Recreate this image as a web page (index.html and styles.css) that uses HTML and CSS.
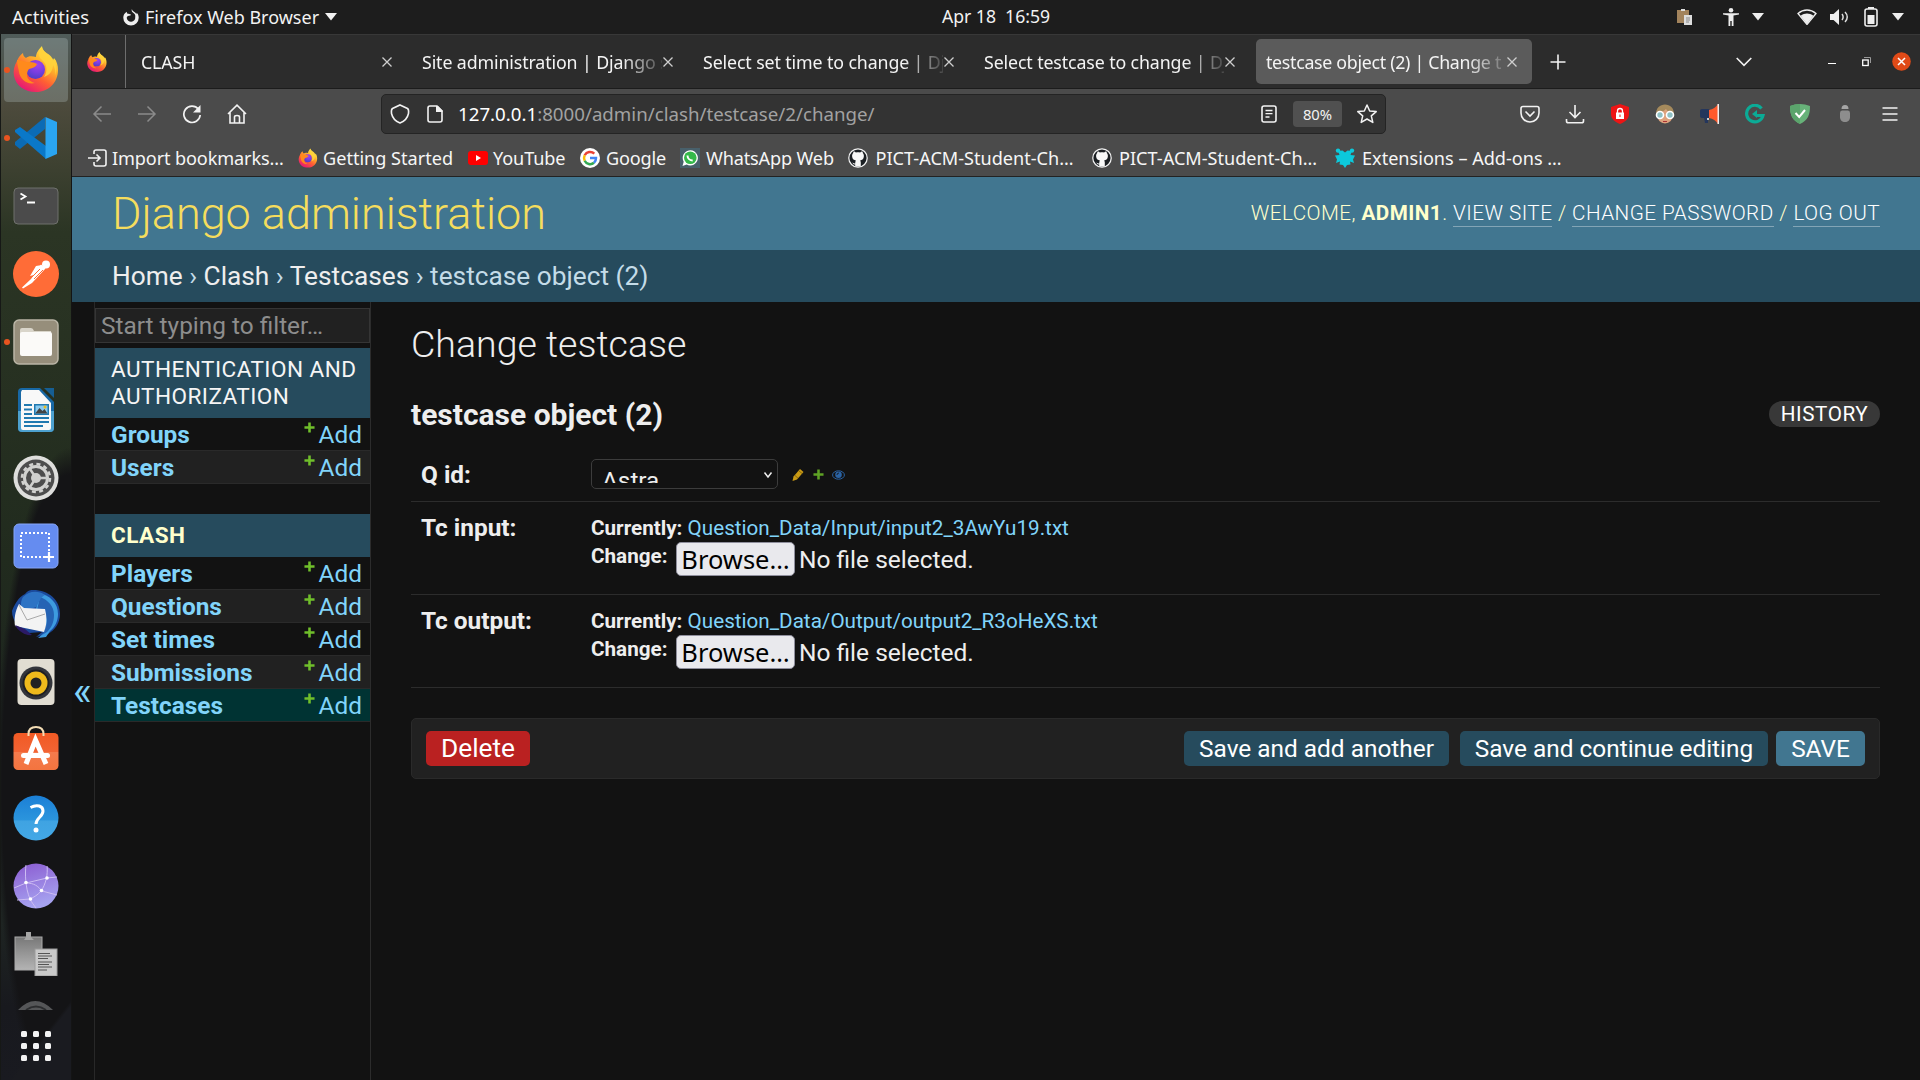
FILE: index.html
```html
<!DOCTYPE html>
<html lang="en">
<head>
<meta charset="utf-8">
<title>testcase object (2) | Change testcase</title>
<link rel="stylesheet" href="styles.css">
</head>
<body>
<svg class="defs" width="0" height="0" aria-hidden="true">
  <defs>
    <linearGradient id="ffBody" x1="0.85" y1="0.05" x2="0.25" y2="1">
      <stop offset="0" stop-color="#fff14a"/><stop offset="0.35" stop-color="#ffb02a"/><stop offset="0.62" stop-color="#ff5f33"/><stop offset="1" stop-color="#e5127a"/>
    </linearGradient>
    <radialGradient id="ffGlobe" cx="0.6" cy="0.25" r="0.8">
      <stop offset="0" stop-color="#a741e8"/><stop offset="0.5" stop-color="#7a3ee0"/><stop offset="1" stop-color="#4b3fc4"/>
    </radialGradient>
    <symbol id="firefox" viewBox="0 0 46 48">
      <path fill="url(#ffBody)" d="M29 1c-3 3-6 7-6 11-4-1-8-1-10 1-2-1-3-3-3-5-3 2-5 5-6 8-3 5-4 10-3 15 2 10 11 16 22 16 13 0 22-10 22-22 0-4-1-9-4-12l-1 3c-1-5-5-6-8-9-2-2-3-4-3-6z"/>
      <circle cx="22.500" cy="24.500" r="9.500" fill="url(#ffGlobe)"/>
      <path fill="#ff8a1c" d="M4 15c4 0 7 1 9 2 4 0 8 0 11 2-1 3-4 4-8 5-1 1-2 3-2 6 0 4 4 7 8 8-8 2-15-4-16-11-.6-4-2-8-2-12z"/>
      <path fill="#ffd43c" opacity=".85" d="M29 2c-4 5-4 10 0 13 5 4 6 11 2 17 6-2 9-7 9-12 2 3 3 7 2 11 3-8 1-15-3-18-1-4-9-5-10-11z"/>
    </symbol>
    <symbol id="close" viewBox="0 0 12 12"><path d="M1.500 1.500l9 9m0-9l-9 9" fill="none" stroke="currentColor" stroke-width="1.300"/></symbol>
    <symbol id="tri" viewBox="0 0 12 8"><path d="M0 0h12L6 7.500z" fill="currentColor"/></symbol>
    <symbol id="github" viewBox="0 0 20 20">
      <circle cx="10" cy="10" r="9.800" fill="#f4f4f4"/><circle cx="10" cy="10" r="8.600" fill="#1b1f23"/>
      <path fill="#f8f8f8" d="M5.200 5c0-.8.200-1.400.5-1.600.8 0 1.700.5 2.300 1 1.300-.3 2.700-.3 4 0 .6-.5 1.500-1 2.300-1 .3.200.6.900.5 1.700.9 1 1.300 2.300 1 3.900-.4 2.300-1.800 3.100-3.700 3.400.5.600.7 1.200.7 2V18c-1.800.7-3.800.7-5.600 0v-1.500c-2 .3-2.300-1.200-3-1.900 1.100 0 1.500 1.300 3 .9 0-1.300.2-2.300.7-3.100-2-.3-3.300-1.200-3.700-3.400-.3-1.600.1-2.900 1-4z"/>
    </symbol>
    <symbol id="plus" viewBox="0 0 12 12"><path d="M6 .5v11M.5 6h11" stroke="#70bf2b" stroke-width="2.800" fill="none"/></symbol>
    <linearGradient id="blueV" x1="0" y1="0" x2="0" y2="1"><stop offset="0" stop-color="#1b7fd6"/><stop offset=".55" stop-color="#2b95dd"/><stop offset=".56" stop-color="#3fa3e2"/><stop offset="1" stop-color="#43a8e6"/></linearGradient>
    <linearGradient id="purpleV" x1="0" y1="0" x2=".3" y2="1"><stop offset="0" stop-color="#8a5ad0"/><stop offset="1" stop-color="#a6a2f0"/></linearGradient>
    <linearGradient id="greyV" x1="0" y1="0" x2="0" y2="1"><stop offset="0" stop-color="#787878"/><stop offset="1" stop-color="#b4b4b4"/></linearGradient>
    <linearGradient id="orangeV" x1="0" y1="0" x2="0" y2="1"><stop offset="0" stop-color="#f15a24"/><stop offset=".5" stop-color="#f26333"/><stop offset=".51" stop-color="#f47b4d"/><stop offset="1" stop-color="#f3743f"/></linearGradient>
  </defs>
</svg>

<div class="desktop">
  <header class="topbar">
    <div class="topbar-left">
      <span class="activities">Activities</span>
      <svg class="app-glyph" width="16" height="17" viewBox="0 0 17 18"><path fill="#eee" d="M9.500 0c-.6 1.500-.3 2.600 1 3.700 2 1.300 3 3 2.500 5a4.500 4.500 0 0 1-9 .8c0-1.300.9-2 2.300-2.300 1.200-.2 2-.6 2.300-1.200C7.300 5.200 5.700 5 5 5 4.300 4.500 4 3.500 4 2.800 1.500 4.200.3 6.500.3 9.300a8.200 8.200 0 0 0 16.400 0C16.700 6.500 15.500 5 14.500 4l-.3 1.500C13.500 3 10 3 9.500 0z"/></svg>
      <span class="app-name">Firefox Web Browser</span>
      <svg class="tri" width="12" height="8"><use href="#tri"/></svg>
    </div>
    <div class="clock">Apr 18&nbsp; 16:59</div>
    <div class="tray">
      <svg width="16" height="18" viewBox="0 0 16 18"><path fill="#a2835c" d="M0 2h12v13H0z"/><path fill="#ddd" d="M4 1h4v2H4zM7 7h8v10H7z"/><path stroke="#888" d="M9 10h4M9 12h4M9 14h3"/></svg>
      <svg class="t-person" width="16" height="18" viewBox="0 0 16 18"><circle cx="8" cy="2.300" r="2.300" fill="#eee"/><path fill="#eee" d="M0 5.200h16v1.300l-5.500.9v10.600H8.700v-5H7.300v5H5.500V7.400L0 6.500z"/></svg>
      <svg class="t-tri" width="12" height="8"><use href="#tri"/></svg>
      <svg class="t-wifi" width="20" height="16" viewBox="0 0 20 16"><path d="M1 4.500C6.500-.2 13.500-.2 19 4.500L10 15.500z" fill="none" stroke="#eee" stroke-width="1.300"/><path d="M3.600 6.800c4-3.200 8.800-3.200 12.800 0L10 15z" fill="#eee"/></svg>
      <svg class="t-sound" width="20" height="16" viewBox="0 0 20 16"><path d="M0 5h3.500L9 0v16l-5.500-5H0z" fill="#eee"/><path d="M12 5c1.500 2 1.500 4 0 6M15 3c3 3 3 7 0 10" fill="none" stroke="#ddd" stroke-width="1.500"/></svg>
      <svg class="t-batt" width="14" height="20" viewBox="0 0 14 20"><path d="M4 0h6v2H4z" fill="#eee"/><rect x="1" y="2" width="12" height="17" rx="2" fill="none" stroke="#eee" stroke-width="1.600"/><path fill="#eee" d="M3.500 8h7v9h-7z"/></svg>
      <svg class="t-tri2" width="12" height="8"><use href="#tri"/></svg>
    </div>
  </header>

  <nav class="dock">
    <div class="dock-item active running"><svg width="46" height="48"><use href="#firefox"/></svg></div>
    <div class="dock-item running"><svg width="42" height="42" viewBox="0 0 42 42"><path fill="#0b6bb5" d="M30 0v12L5 32l-5-4v-3z"/><path fill="#0a78c9" d="M5 10l26 19v13L0 15v-2z"/><path fill="#2aa5f2" d="M30.500 0L42 5v32l-11.500 5z"/></svg></div>
    <div class="dock-item"><svg width="46" height="38" viewBox="0 0 46 38"><rect x="1" y="1" width="44" height="36" rx="4" fill="#4b4b4b" stroke="#6f716c"/><path d="M7.500 6.500l5 3-5 3M14 15.500h8" fill="none" stroke="#fff" stroke-width="1.800"/></svg></div>
    <div class="dock-item"><svg width="46" height="46" viewBox="0 0 46 46"><circle cx="23" cy="23" r="23" fill="#ff6c37"/><g transform="translate(23 23)" fill="#fff"><circle cx="10" cy="-9.500" r="4"/><path d="M5-9.500l4.500 4L-4 9l-9 5.500-1-1L-5 5z"/><path d="M0-8l6-1-8 10-4 1z"/><path d="M-4 3l8-8M-2 5l9-9" stroke="#ff6c37"/></g></svg></div>
    <div class="dock-item running"><svg width="46" height="46" viewBox="0 0 46 46"><rect x="1" y="1" width="44" height="44" rx="5" fill="#968e7b" stroke="#bab5a6" stroke-width="1.500"/><path fill="#d9d5ca" d="M7 11q0-2 2-2h9q2 0 3 3h17v8H7z"/><rect x="7" y="13" width="32" height="24" rx="2" fill="#fbfaf8"/></svg></div>
    <div class="dock-item"><svg width="38" height="46" viewBox="0 0 38 46"><path fill="#1868a5" d="M5 1h18l14 14v26q0 4-4 4H5q-4 0-4-4V5q0-4 4-4z"/><path fill="#4da1cf" d="M1 24h36v17q0 4-4 4H5q-4 0-4-4z"/><path fill="#f8f8f8" d="M5 3h17l12 13v25q0 2-2 2H6q-2 0-2-2V5z"/><path fill="#165e93" d="M27 1h10v10z"/><path stroke="#2079b0" stroke-width="2" d="M7 18h8M7 22.500h8M7 27h8M7 31h25M7 35h25M7 39h19"/><path fill="#2079b0" d="M17 17h15v11H17z"/><path fill="#8acbf0" d="M18.500 18.500h12v8h-12z"/><path fill="#444" d="M18.500 26l4-5 3 3 2-2 3 4.500h-12z"/><circle cx="28" cy="20" r="1.500" fill="#e6bd22"/></svg></div>
    <div class="dock-item"><svg width="46" height="46" viewBox="0 0 46 46"><circle cx="23" cy="23" r="22.500" fill="#dededc"/><circle cx="23" cy="23" r="18.500" fill="#4d4d4d"/><circle cx="23" cy="23" r="14" fill="none" stroke="#d2d2d0" stroke-width="2.500" stroke-dasharray="4 3.330"/><circle cx="23" cy="23" r="11.500" fill="none" stroke="#d2d2d0" stroke-width="3"/><circle cx="23" cy="23" r="5" fill="#cfcfcd"/><path stroke="#cfcfcd" stroke-width="2.500" d="M23 23h11M23 23l-6-9M23 23l-6 9"/></svg></div>
    <div class="dock-item"><svg width="46" height="46" viewBox="0 0 46 46"><rect x="1" y="1" width="44" height="44" rx="5" fill="#658cf0" stroke="#86a5f7"/><rect x="8" y="10" width="28" height="24" fill="none" stroke="#fff" stroke-width="2" stroke-dasharray="2 2"/><path stroke="#658cf0" stroke-width="7" d="M31 34h11"/><path stroke="#fff" stroke-width="2.200" d="M31 34h10M36 29v10"/></svg></div>
    <div class="dock-item"><svg width="50" height="50" viewBox="0 0 50 50"><path fill="#1b4a9c" d="M14 5c3-4 6-4 8-4 16 0 27 10 27 24 0 9-5 16-12 20l-12 3 6-5-13 1C8 40 1 32 1 22 4 14 8 8 14 5z"/><path fill="#3d9be0" d="M27 4c12 2 20 10 20 21 0 7-3 13-8 17l-4 6-8 1 6-5c5-10 2-20-8-22z"/><path fill="#2563b4" d="M29 8c8 3 14 9 14 18 0 8-3 13-7 17l-5 3 3-5c4-10 2-17-8-20z"/><path fill="#2d73c4" d="M12 8c6-6 15-7 22-2-5 2-6 8-9 12l-14 5c-2-6-1-12 1-15z"/><path fill="#f3f3f3" d="M8 15l5 4 21 1 1 5c1 8 0 13-2 18L4 37c-1-7 0-15 4-22z"/><path fill="none" stroke="#a9a9a9" d="M8 16l8 15 18-6"/><path fill="#2b1a66" d="M4 36l10 4 7 6C14 47 7 42 4 36z"/></svg></div>
    <div class="dock-item"><svg width="38" height="46" viewBox="0 0 38 46"><rect width="37" height="46" x=".5" rx="4" fill="#e1ddd2"/><circle cx="19" cy="24" r="16.500" fill="#33353b"/><circle cx="19" cy="24" r="13.500" fill="#1f2023"/><circle cx="19" cy="24" r="11.500" fill="#efba1c"/><circle cx="19" cy="24" r="5.500" fill="#222"/></svg></div>
    <div class="dock-item lift"><svg width="46" height="46" viewBox="0 0 46 46"><rect x=".5" y="7" width="45" height="37" rx="4.500" fill="url(#orangeV)"/><path fill="none" stroke="#f3ddb5" stroke-width="2" d="M15.500 10V8q0-7 7.500-7t7.500 7v2"/><path fill="none" stroke="#fff" stroke-width="5" d="M13 38l9.500-24L33 38"/><rect x="8" y="27" width="29" height="5" rx="2.500" fill="#fff"/></svg></div>
    <div class="dock-item"><svg width="46" height="46" viewBox="0 0 46 46"><circle cx="23" cy="23" r="22.500" fill="url(#blueV)"/><path d="M17.500 12.500C24 9 30 11 30 16c0 6-7 6.500-7 13" fill="none" stroke="#fff" stroke-width="3"/><circle cx="23" cy="35" r="2.500" fill="#fff"/></svg></div>
    <div class="dock-item"><svg width="46" height="46" viewBox="0 0 46 46"><circle cx="23" cy="23" r="22.500" fill="url(#purpleV)"/><g fill="none" stroke="#cdbdf3" stroke-width="1"><path d="M13 2c-1 8-1 22 4 34 2 4 4 6 6 9M1 25l12-5 21-5 10-1M13 20c8 0 12 3 16 8l15 4M34 3c1 8-1 18-6 25-3 4-7 6-11 8l-13 1"/></g><g fill="#fff"><circle cx="13" cy="19.500" r="1.800"/><circle cx="34" cy="15" r="1.800"/><circle cx="28.500" cy="27.500" r="1.800"/><circle cx="17.500" cy="36" r="1.800"/></g></svg></div>
    <div class="dock-item lift"><svg width="44" height="46" viewBox="0 0 44 46"><rect x="1" y="7" width="27" height="33" fill="url(#greyV)" stroke="#aaa"/><path fill="#a5a5a5" d="M10 10l2-3V2h5v5l3 3z"/><rect x="21" y="19" width="22" height="27" fill="#c9c9c9" stroke="#9b9b9b"/><path stroke="#555" d="M24 23.500h12M24 26h14M24 28.500h10M24 32h14M24 34.500h11M24 37h14M24 40h9"/></svg></div>
    <svg class="dock-cut" width="36" height="9" viewBox="0 0 36 9"><path fill="#555658" d="M0 9Q17-9 35 9z"/><path fill="none" stroke="#2c2d2f" stroke-width="2" d="M8 9q10-7 20 0"/></svg>
    <svg class="apps" width="30" height="30" viewBox="0 0 30 30" fill="#f3f3f3"><rect width="6" height="6" rx="1.500"/><rect x="12" width="6" height="6" rx="1.500"/><rect x="24" width="6" height="6" rx="1.500"/><rect y="12" width="6" height="6" rx="1.500"/><rect x="12" y="12" width="6" height="6" rx="1.500"/><rect x="24" y="12" width="6" height="6" rx="1.500"/><rect y="24" width="6" height="6" rx="1.500"/><rect x="12" y="24" width="6" height="6" rx="1.500"/><rect x="24" y="24" width="6" height="6" rx="1.500"/></svg>
  </nav>

  <main class="browser">
    <div class="tabs">
      <div class="pinned"><svg width="20" height="24"><use href="#firefox"/></svg></div>
      <div class="tab"><span class="tab-text">CLASH</span><svg class="x" width="12" height="12"><use href="#close"/></svg></div>
      <div class="tab"><span class="tab-text">Site administration | Django s</span><svg class="x" width="12" height="12"><use href="#close"/></svg></div>
      <div class="tab"><span class="tab-text">Select set time to change | Dj</span><svg class="x" width="12" height="12"><use href="#close"/></svg></div>
      <div class="tab"><span class="tab-text">Select testcase to change | Dj</span><svg class="x" width="12" height="12"><use href="#close"/></svg></div>
      <div class="tab current"><span class="tab-text">testcase object (2) | Change t</span><svg class="x" width="12" height="12"><use href="#close"/></svg></div>
      <svg class="new-tab" width="16" height="16" viewBox="0 0 16 16"><path d="M8 .5v15M.5 8h15" stroke="#f2f2f2" stroke-width="1.600"/></svg>
      <div class="window-controls">
        <svg width="16" height="10" viewBox="0 0 16 10"><path d="M.7 1L8 8.300 15.300 1" fill="none" stroke="#f2f2f2" stroke-width="1.600"/></svg>
        <svg class="wc-min" width="8" height="9" viewBox="0 0 8 9"><path d="M0 6.500h8" stroke="#fff"/></svg>
        <svg class="wc-max" width="10" height="10" viewBox="0 0 10 10"><path d="M2 .5h6.500V6" fill="none" stroke="#999"/><rect x=".7" y="3" width="5.500" height="5.500" fill="none" stroke="#fff" stroke-width="1.300"/></svg>
        <svg class="wc-close" width="19" height="19" viewBox="0 0 19 19"><circle cx="9.500" cy="9.500" r="9.300" fill="#e04a17"/><path d="M6 6l7 7m0-7l-7 7" stroke="#fff" stroke-width="1.500"/></svg>
      </div>
    </div>

    <div class="toolbar">
      <div class="nav-buttons">
        <svg width="20" height="20" viewBox="0 0 20 20" fill="none" stroke="#8b8b8b" stroke-width="1.500"><path d="M19 10H2M9.500 2.500L2 10l7.500 7.500"/></svg>
        <svg width="20" height="20" viewBox="0 0 20 20" fill="none" stroke="#8b8b8b" stroke-width="1.500"><path d="M1 10h17M10.500 2.500L18 10l-7.500 7.500"/></svg>
        <svg width="20" height="20" viewBox="0 0 20 20" fill="none" stroke="#f2f2f2" stroke-width="1.700"><path d="M16.500 5.200A8.200 8.200 0 1 0 18.200 11"/><path fill="#f2f2f2" stroke="none" d="M18.500 1v7.500H11z"/></svg>
        <svg width="20" height="20" viewBox="0 0 20 20" fill="none" stroke="#f2f2f2" stroke-width="1.600"><path d="M1 10l9-8.800L19 10M3 8.500V19h14V8.500M7.500 19v-6q0-1.500 2.500-1.500t2.500 1.500v6"/></svg>
      </div>
      <div class="urlbar">
        <svg class="u-shield" width="20" height="20" viewBox="0 0 20 20" fill="none" stroke="#f2f2f2" stroke-width="1.600"><path d="M10 1l7.500 3.500q1.500 1 1 5C17.500 14 14 17.500 10 19 6 17.500 2.500 14 1.500 9.500q-.5-4 1-5z"/></svg>
        <svg class="u-doc" width="16" height="18" viewBox="0 0 16 18"><path fill="none" stroke="#f2f2f2" stroke-width="1.600" d="M3 1h7l5 5v9q0 2-2 2H3q-2 0-2-2V3q0-2 2-2z"/><path fill="#f2f2f2" d="M9 1h2l4.500 4.500V7H9z"/></svg>
        <span class="url"><b>127.0.0.1</b>:8000/admin/clash/testcase/2/change/</span>
        <svg class="u-reader" width="16" height="18" viewBox="0 0 16 18" fill="none" stroke="#f2f2f2" stroke-width="1.600"><rect x="1" y="1" width="14" height="16" rx="2"/><path d="M4.500 5.500h7M4.500 8.700h7M4.500 12h4" stroke-width="1.300"/></svg>
        <span class="zoom">80%</span>
        <svg class="u-star" width="20" height="20" viewBox="0 0 20 20" fill="none" stroke="#f2f2f2" stroke-width="1.500" stroke-linejoin="round"><path d="M10 1l2.700 6 6.500.6-4.900 4.300 1.500 6.500L10 15l-5.800 3.400 1.500-6.500L.8 7.600 7.300 7z"/></svg>
      </div>
      <div class="extensions">
        <svg width="20" height="20" viewBox="0 0 20 20" fill="none" stroke="#f2f2f2" stroke-width="1.600"><path d="M3 2.500h14q2 0 2 2V9a9 9 0 0 1-18 0V4.500q0-2 2-2z"/><path d="M5.500 7.500L10 12l4.500-4.500"/></svg>
        <svg width="20" height="20" viewBox="0 0 20 20" fill="none" stroke="#f2f2f2" stroke-width="1.600"><path d="M10 1v12M4.500 8L10 13.500 15.500 8M1.500 15v2q0 1.800 1.800 1.800h13.400q1.800 0 1.800-1.800v-2"/></svg>
        <svg width="20" height="20" viewBox="0 0 20 20"><path fill="#ed1515" d="M10 0l9 3v7c0 5-4 8-9 10-5-2-9-5-9-10V3z"/><rect x="6" y="8.500" width="8" height="6.500" fill="#fff"/><path d="M7.500 9V7a2.500 2.500 0 0 1 5 0v2" fill="none" stroke="#fff" stroke-width="1.300"/><path stroke="#e11" d="M10 10.500v2.500"/></svg>
        <svg width="20" height="20" viewBox="0 0 20 20"><ellipse cx="10" cy="11" rx="8" ry="8.500" fill="#dda27d"/><path fill="#a58a5c" d="M1 10C1 4 5 .5 10 .5S19 4 19 10q-6-1-8-5Q8 8 1 10z"/><g fill="#8fc0c4" stroke="#fff" stroke-width="1.600"><circle cx="5" cy="11" r="3.500"/><circle cx="15" cy="11" r="3.500"/></g><path stroke="#a33" d="M8 17.500h4"/></svg>
        <svg width="20" height="20" viewBox="0 0 20 20"><rect x="0" y="5" width="10" height="9" rx="2" fill="#24365c"/><path fill="#24365c" d="M4 13h4v6H5z"/><path fill="#ff5a2c" d="M9 6q6-1 9-6v20q-3-5-9-6z"/><path fill="#eee" d="M17.500 0H19v20h-1.500z"/><circle cx="8" cy="15" r="1" fill="#fff"/></svg>
        <svg width="20" height="20" viewBox="0 0 20 20"><path d="M16.500 4.500A8.300 8.300 0 1 0 18 11.500h-6" fill="none" stroke="#0bab96" stroke-width="3.200"/><path fill="#0bab96" d="M12 6v8l-5-4z"/></svg>
        <svg width="20" height="20" viewBox="0 0 20 20"><path fill="#67b279" d="M0 2Q5 0 10 0t10 2c0 9-2 14-10 18C2 16 0 11 0 2z"/><path fill="#5ba46c" d="M10 0v20C2 16 0 11 0 2q5-2 10-2z"/><path d="M5.500 9l3.700 4L15 6" fill="none" stroke="#fff" stroke-width="2"/></svg>
        <svg width="20" height="20" viewBox="0 0 20 20"><path fill="#a5a5a5" d="M6.500 5q0-4 3.500-4t3.500 4z"/><path fill="#8d8d8d" d="M5 9q0-2.500 2-2.500h6q2 0 2 2.500v4c0 3-2 5-5 5s-5-2-5-5z"/></svg>
        <svg width="20" height="20" viewBox="0 0 20 20"><path d="M2.500 4h15M2.500 10h15M2.500 16h15" stroke="#f2f2f2" stroke-width="1.700"/></svg>
      </div>
    </div>

    <div class="bookmarks">
      <a class="bm bm-import"><svg width="20" height="20" viewBox="0 0 20 20" fill="none" stroke="#f2f2f2" stroke-width="1.600"><path d="M6 6V4q0-2 2-2h8q2 0 2 2v12q0 2-2 2H8q-2 0-2-2v-2M0 10h12M8.500 6.500L12 10l-3.500 3.500"/></svg>Import bookmarks…</a>
      <a class="bm bm-start"><svg width="20" height="20"><use href="#firefox"/></svg>Getting Started</a>
      <a class="bm bm-yt"><svg width="20" height="20" viewBox="0 0 20 20"><rect y="3" width="20" height="14" rx="3" fill="#f00"/><path fill="#fff" d="M8 7l5 3-5 3z"/></svg>YouTube</a>
      <a class="bm bm-google"><svg width="20" height="20" viewBox="0 0 20 20"><circle cx="10" cy="10" r="10" fill="#fff"/><g fill="none" stroke-width="2.500"><path stroke="#ea4335" d="M14.300 5.700A6 6 0 0 0 4.700 7.300"/><path stroke="#fbbc05" d="M4.700 7.300a6 6 0 0 0 0 5.400"/><path stroke="#34a853" d="M4.700 12.700a6 6 0 0 0 9.300 2"/><path stroke="#4285f4" d="M14 14.700a6 6 0 0 0 2-4.700h-6"/></g></svg>Google</a>
      <a class="bm bm-wa"><svg width="20" height="20" viewBox="0 0 20 20"><path fill="#48606b" d="M0 0h20v20H0z"/><path fill="#fff" d="M2.500 18l1.200-4.300a7.600 7.600 0 1 1 3 2.900z"/><circle cx="10.300" cy="9.800" r="6.300" fill="#34b94a"/><path d="M7.500 7.500c0 3 2.500 5 5.200 5" fill="none" stroke="#fff" stroke-width="2"/></svg>WhatsApp Web</a>
      <a class="bm bm-gh1"><svg width="20" height="20"><use href="#github"/></svg>PICT-ACM-Student-Ch…</a>
      <a class="bm bm-gh2"><svg width="20" height="20"><use href="#github"/></svg>PICT-ACM-Student-Ch…</a>
      <a class="bm bm-ext"><svg width="20" height="20" viewBox="0 0 20 20"><g fill="#0cc9db"><circle cx="3" cy="2.600" r="2.200"/><circle cx="17" cy="2.600" r="2.200"/><path d="M3 3l4.500-.5L10 4.500l2.500-2L17 3l-1.500 4 4.500.5-2 4 1 3.500-4-1.500.5 3L12 17l-2 3-2-3-3.500-.5.500-3L1 15l1-3.500-2-4L4.500 7z"/></g></svg>Extensions – Add-ons …</a>
    </div>

    <div class="page">
      <div class="site-header">
        <h1>Django administration</h1>
        <div class="user-tools">Welcome, <strong>admin1</strong>. <a>View site</a> / <a>Change password</a> / <a>Log out</a></div>
      </div>
      <div class="breadcrumbs"><a>Home</a> › <a>Clash</a> › <a>Testcases</a> › testcase object (2)</div>
      <div class="body">
        <div class="toggle">«</div>
        <aside class="sidebar">
          <div class="filter">Start typing to filter…</div>
          <section class="module">
            <h2 class="caption">Authentication and Authorization</h2>
            <div class="row"><b>Groups</b><span class="add"><svg width="11" height="11"><use href="#plus"/></svg>Add</span></div>
            <div class="row"><b>Users</b><span class="add"><svg width="11" height="11"><use href="#plus"/></svg>Add</span></div>
          </section>
          <section class="module">
            <h2 class="caption here">Clash</h2>
            <div class="row"><b>Players</b><span class="add"><svg width="11" height="11"><use href="#plus"/></svg>Add</span></div>
            <div class="row"><b>Questions</b><span class="add"><svg width="11" height="11"><use href="#plus"/></svg>Add</span></div>
            <div class="row"><b>Set times</b><span class="add"><svg width="11" height="11"><use href="#plus"/></svg>Add</span></div>
            <div class="row"><b>Submissions</b><span class="add"><svg width="11" height="11"><use href="#plus"/></svg>Add</span></div>
            <div class="row selected"><b>Testcases</b><span class="add"><svg width="11" height="11"><use href="#plus"/></svg>Add</span></div>
          </section>
        </aside>
        <div class="content">
          <h1 class="title">Change testcase</h1>
          <div class="object-line"><h2>testcase object (2)</h2><a class="history">History</a></div>
          <div class="form-row fk">
            <label>Q id:</label>
            <div class="select"><span class="select-value">Astra</span><svg width="10" height="8" viewBox="0 0 10 8"><path d="M1.500 1.500L5 6l3.500-4.500" fill="none" stroke="#eee" stroke-width="1.500"/></svg></div>
            <div class="related">
              <svg width="12" height="12" viewBox="0 0 12 12"><path fill="#c99a14" d="M8 0l3.500 3L5 10.500.5 12 1.500 7.500z"/><path d="M7 2l3.300 2.700M3 6.500l3 2.700" stroke="#6d5308" stroke-width=".7"/></svg>
              <svg width="11" height="11" viewBox="0 0 12 12"><path d="M6 .5v11M.5 6h11" stroke="#5fa225" stroke-width="2.800" fill="none"/></svg>
              <svg width="13" height="10" viewBox="0 0 13 10"><ellipse cx="6.500" cy="5" rx="5.900" ry="4.200" fill="none" stroke="#2a63a5"/><circle cx="6.500" cy="4.700" r="3.300" fill="#2a63a5"/><path d="M5 5q0-2 2-2" fill="none" stroke="#111" stroke-width=".8"/></svg>
            </div>
          </div>
          <div class="form-row file">
            <label>Tc input:</label>
            <div class="upload">
              <div class="current-file">Currently: <a>Question_Data/Input/input2_3AwYu19.txt</a></div>
              <div class="change-file"><span class="change-label">Change:</span><span class="browse">Browse…</span><span class="no-file">No file selected.</span></div>
            </div>
          </div>
          <div class="form-row file">
            <label>Tc output:</label>
            <div class="upload">
              <div class="current-file">Currently: <a>Question_Data/Output/output2_R3oHeXS.txt</a></div>
              <div class="change-file"><span class="change-label">Change:</span><span class="browse">Browse…</span><span class="no-file">No file selected.</span></div>
            </div>
          </div>
          <div class="submit-row">
            <a class="btn delete">Delete</a>
            <a class="btn add-another">Save and add another</a>
            <a class="btn continue">Save and continue editing</a>
            <a class="btn save">Save</a>
          </div>
        </div>
      </div>
    </div>
  </main>
</div>
</body>
</html>
```
FILE: styles.css
```css
* { box-sizing: border-box; }
body { margin: 0; background: #121212; overflow: hidden; font-family: "Noto Sans", "Open Sans", sans-serif; }
h1, h2 { margin: 0; }
svg { display: block; flex: none; }
.defs { position: absolute; }

.desktop { width: 1920px; height: 1080px; display: grid; grid-template-columns: 72px 1fr; grid-template-rows: 34px 1fr; }

/* Top bar */
.topbar { grid-column: 1 / 3; display: grid; grid-template-columns: 941px auto 1fr; align-items: center; background: #1d1d1d; color: #f2f2f2; font-size: 18px; line-height: 34px; white-space: nowrap; }
.topbar-left { display: flex; align-items: center; padding-left: 12px; }
.activities { width: 111px; font-size: 18.500px; }
.app-name { width: 179px; padding-left: 6px; }
.tri { margin-left: 7px; }
.clock { width: 110px; font-size: 17.600px; line-height: 32px; text-align: center; margin-top: -2px; }
.tray { display: flex; align-items: center; justify-content: flex-end; padding-right: 16px; color: #eee; }
.t-person { margin-left: 30px; }
.t-tri { margin-left: 13px; }
.t-wifi { margin-left: 33px; }
.t-sound { margin-left: 13px; }
.t-batt { margin-left: 14px; }
.t-tri2 { margin-left: 14px; }

/* Dock */
.dock { display: flex; flex-direction: column; align-items: center; padding-top: 1px; border-left: 1px solid #161816; border-right: 1px solid #141414;
  background:
    linear-gradient(128deg, transparent 93%, #1a1b20 93.500%),
    radial-gradient(ellipse 75px 340px at 100% 72%, #141416 92%, transparent 100%),
    radial-gradient(ellipse 26px 70px at 100% 57%, #351a1d 0, transparent 100%),
    linear-gradient(180deg, #505c5a 0, #4c4a3c 7%, #3f4232 12%, #2b3524 19%, #263021 35%, #212b1e 50%, #1d251f 65%, #1e2422 85%, #18191e 93%, #191a20 100%); }
.dock-item { position: relative; width: 64px; height: 64px; margin: 3px 0 1px; flex: none; display: flex; align-items: center; justify-content: center; border-radius: 4px; }
.dock-item.active { background: rgba(190, 205, 205, .28); }
.dock-item.active svg { margin-bottom: 2px; }
.dock-item.running::before { content: ""; position: absolute; left: 0; top: 29px; width: 6px; height: 6px; border-radius: 50%; background: #e95420; }
.dock-item.lift { padding-bottom: 2px; }
.dock-cut { margin-top: 14px; }
.apps { margin-top: 21px; }

/* Browser chrome */
.browser { display: flex; flex-direction: column; min-width: 0; background: #4b4b4b; }
.tabs { display: flex; align-items: center; height: 55px; background: #2c2c2c; border-top: 1px solid #383838; border-bottom: 1px solid #1c1c1c; color: #f4f4f4; }
.pinned { width: 54px; height: 53px; padding-left: 15px; display: flex; align-items: center; border-right: 1px solid #6e6e6e; margin-right: 5px; }
.tab { width: 276px; height: 45px; margin-right: 5px; padding-left: 10px; display: flex; align-items: center; border-radius: 5px; flex: none; }
.tab-text { width: 240px; overflow: hidden; white-space: nowrap; font-size: 17.800px; line-height: 45px; padding-top: 1px; letter-spacing: -.12px; -webkit-mask-image: linear-gradient(90deg, #000 200px, transparent 246px); mask-image: linear-gradient(90deg, #000 200px, transparent 246px); }
.tab .x { color: #cfcfcf; }
.tab.current { background: #5b5b5b; margin-left: 1px; margin-right: 0; padding-left: 10px; }
.tab.current .tab-text { letter-spacing: -.3px; }
.new-tab { margin-left: 18px; }
.window-controls { display: flex; align-items: center; margin-left: auto; padding-right: 9px; }
.wc-min { margin-left: 76px; }
.wc-max { margin-left: 26px; }
.wc-close { margin-left: 20px; }

.toolbar { display: flex; align-items: center; height: 51px; padding-bottom: 1px; }
.nav-buttons { display: flex; gap: 25px; width: 309px; padding-left: 20px; }
.urlbar { display: flex; align-items: center; width: 1005px; height: 40px; background: #333; border: 1px solid #242424; border-radius: 5px; font-size: 18.700px; }
.u-shield { margin-left: 8px; }
.u-doc { margin-left: 17px; }
.url { margin-left: 15px; color: #a2a2a2; width: 803px; white-space: nowrap; line-height: 38px; }
.url b { font-weight: 400; color: #fff; }
.zoom { margin-left: 16px; width: 49px; height: 26px; border-radius: 4px; background: #505050; color: #f2f2f2; font-size: 14.800px; line-height: 26px; text-align: center; }
.u-star { margin-left: 15px; }
.extensions { display: flex; gap: 25px; margin-left: auto; padding-right: 20px; }

.bookmarks { display: flex; align-items: center; height: 37px; padding-left: 16px; padding-bottom: 1px; border-bottom: 1px solid #222; color: #f6f6f6; font-size: 18.100px; white-space: nowrap; line-height: 30px; }
.bm { display: flex; align-items: center; gap: 5px; flex: none; }
.bm-import { width: 210px; gap: 4px; letter-spacing: -.12px; }
.bm-start { width: 170px; gap: 5px; }
.bm-yt { width: 112px; letter-spacing: -.1px; }
.bm-google { width: 100px; gap: 6px; letter-spacing: -.15px; }
.bm-wa { width: 168px; gap: 6px; letter-spacing: -.15px; }
.bm-gh1 { width: 244px; gap: 7.500px; }
.bm-gh2 { width: 243px; gap: 7px; }
.bm-ext { gap: 7px; }

/* Admin page */
.page { flex: 1; display: flex; flex-direction: column; background: #121212; color: #eee; font-family: Roboto, sans-serif; font-size: 24.400px; }
.site-header { height: 73px; background: #417690; display: flex; align-items: center; justify-content: space-between; padding: 0 40px 0 40px; }
.site-header h1 { font-weight: 300; font-size: 45px; line-height: 73px; color: #f5dd5d; }
.user-tools { font-weight: 300; font-size: 20.680px; letter-spacing: .46px; text-transform: uppercase; color: #ffc; white-space: nowrap; padding-bottom: 2px; }
.user-tools strong { font-weight: 700; }
.user-tools a { color: #fff; border-bottom: 1px solid rgba(255, 255, 255, .35); padding-bottom: 1px; }
.breadcrumbs { height: 52px; line-height: 52px; background: #264b5d; padding-left: 40px; font-size: 26.250px; color: #c4dce8; }
.breadcrumbs a { color: #eee; }

.body { flex: 1; display: grid; grid-template-columns: 22px 277px 1fr; }
.toggle { padding: 372px 0 0 1px; font-size: 40px; line-height: 36px; color: #81d4fa; height: 460px; }
.sidebar { border-left: 1px solid #282828; border-right: 1px solid #2c2c2c; padding-top: 6px; }
.filter { height: 35px; border: 1px solid #353535; background: #212121; color: #8d8d8d; line-height: 34px; padding-left: 5px; }
.module { margin: 5px 0 30px; }
.caption { background: #264b5d; color: #f5f5f5; font-weight: 400; font-size: 22.560px; line-height: 27px; letter-spacing: .46px; text-transform: uppercase; padding: 8px 10px 8px 16px; height: 70px; }
.caption.here { height: 43px; color: #ffc; font-weight: 700; }
.row { height: 33px; display: flex; justify-content: space-between; align-items: center; padding: 1px 8px 0 16px; border-bottom: 1px solid #2a2a2a; color: #81d4fa; line-height: 32px; }
.row:nth-child(odd) { background: #212121; }
.row.selected { background: #033; }
.add { display: flex; align-items: center; }
.add svg { margin: 0 4px 15px 0; }

.content { padding: 0 40px 0 40px; }
.title { font-weight: 300; font-size: 37.500px; line-height: 44px; padding-top: 20px; color: #eee; }
.object-line { display: flex; align-items: center; justify-content: space-between; height: 36px; margin-top: 30px; }
.object-line h2 { font-size: 30px; line-height: 36px; font-weight: 700; padding-top: 2px; }
.history { width: 111px; height: 26px; border-radius: 14px; background: #383838; color: #fff; font-size: 20.680px; line-height: 26px; letter-spacing: .55px; text-transform: uppercase; text-align: center; }
.form-row { display: flex; align-items: flex-start; border-bottom: 1px solid #2c2c2c; padding-left: 10px; }
.form-row label { width: 170px; font-weight: 700; line-height: 30px; flex: none; }
.form-row.fk { height: 70px; padding-top: 27px; }
.form-row.fk label { line-height: 32px; }
.form-row.file { height: 93px; padding-top: 11px; }
.select { width: 187px; height: 30px; border: 1px solid #3c3c3c; border-radius: 5px; display: flex; align-items: center; justify-content: space-between; padding: 0 4px 0 10px; }
.select svg { margin-top: 1px; }
.select-value { height: 18px; overflow: hidden; line-height: 31px; margin-top: -1px; font-size: 24.300px; }
.related { display: flex; align-items: center; gap: 8.500px; height: 31px; margin-left: 14px; }
.upload { font-size: 20.670px; color: #eee; }
.current-file { font-weight: 700; line-height: 30px; }
.current-file a { font-weight: 400; color: #81d4fa; }
.change-file { display: flex; margin-top: -1px; }
.change-label { width: 85px; font-weight: 700; line-height: 29px; }
.browse { width: 119px; height: 34px; border: 1px solid #8f8f9d; border-radius: 5px; background: #e9e9ed; color: #000; font: 25.500px/32px "Noto Sans", sans-serif; text-align: center; }
.no-file { margin-left: 4px; font-size: 24.500px; line-height: 35px; }
.submit-row { display: flex; align-items: center; height: 61px; margin-top: 30px; padding: 0 14px; background: #212121; border: 1px solid #2a2a2a; border-radius: 5px; }
.btn { height: 35px; line-height: 36px; border-radius: 5px; color: #fff; text-align: center; white-space: nowrap; }
.delete { width: 104px; background: #ba2121; font-size: 26.300px; line-height: 35px; margin-right: auto; }
.add-another { width: 265px; background: #264b5d; margin-right: 11px; }
.continue { width: 308px; background: #264b5d; margin-right: 8px; }
.save { width: 89px; background: #417690; text-transform: uppercase; }
```
